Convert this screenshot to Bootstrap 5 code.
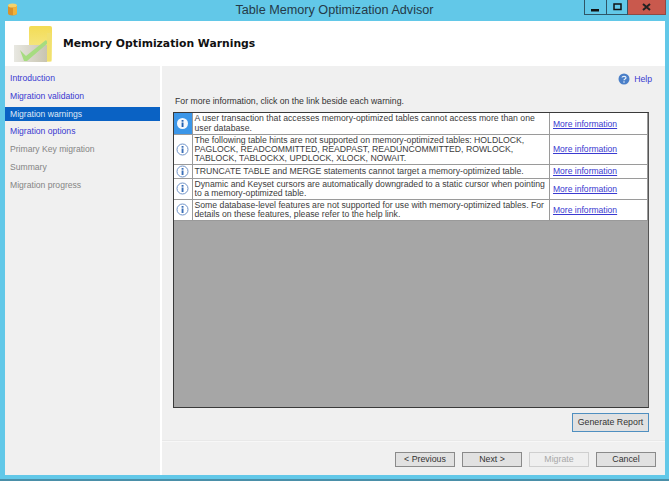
<!DOCTYPE html>
<html lang="en">
<head>
<meta charset="utf-8">
<title>Table Memory Optimization Advisor</title>
<link rel="stylesheet" href="https://cdn.jsdelivr.net/npm/bootstrap@5.3.0/dist/css/bootstrap.min.css">
<style>
html,body{margin:0;height:481px;width:669px;overflow:hidden;background:#62c8e8}
body{font-family:"Liberation Sans",Arial,sans-serif;font-size:8.7px;line-height:10px;color:#333}
.win{width:669px;height:481px;background:#62c8e8;border-bottom:2px solid #4a8fa8;padding:0 4px 4px 5px}
.tbar{height:21px;margin:0 -4px 0 -5px;position:relative}
.ttl{font-size:12.65px;line-height:21px;color:#243a48;text-align:center}
.appic{position:absolute;left:7px;top:3px}
.wbtns{position:absolute;right:3px;top:0;height:15px}
.wb{width:23px;height:15px;border:1px solid #2f5566;border-top:0}
.wb2{width:21px;border-left:0}
.wbx{width:38px;background:#c9594d;border-color:#8e4a44;border-left:0}
.hdr{height:45px;background:#fff;padding-left:9px;gap:10px}
.hdr h1{font-family:"DejaVu Sans",sans-serif;font-size:10.8px;font-weight:700;color:#111;margin:0;line-height:14px}
.bodyrow{height:409px;background:#f0f0f0}
.side{width:155px;padding-top:3px}
.sitem{height:17.8px;line-height:14px;padding:2px 0 2px 5px;color:#3a3ad0;font-size:8.6px}
.sitem.cur{background:#0a62c4;color:#dfe8f6;height:14px;line-height:14px;padding:0 0 0 5px;margin:2px 0 1.8px}
.sitem.off{color:#858585}
.vsep{width:2px;background:#fff}
.mainp{width:503px}
.upper{height:353px;padding:0 16px 0 11px}
.helprow{height:21px;padding-top:4px;gap:4px;color:#3a3ad0;margin-right:-3px}
.intro{margin:9px 0 6px 2px;line-height:10px;height:10px}
.gridbox{height:296px;background:#a6a6a6;border:1px solid #3a3a3a;border-right-color:#555;width:476px}
.wtab{width:100%;margin:0;background:#fff;table-layout:fixed;border-collapse:collapse;line-height:9.3px;font-size:8.68px}
.wtab td{padding:0;border:1px solid #9a9a9a;border-width:0 1px 1px 0;vertical-align:middle;background:#fff;color:#3c3c3c}
.wtab .ic{width:18px;text-align:center}
.wtab .ic svg{display:block;margin:auto}
.wtab .tx{padding:1px 1px 0 2px}
.wtab .lk{width:98px;padding:2px 0 0 3px;font-size:8.55px}
.wtab a{color:#3a3ad0}
.wtab tr.first .ic{background:#3b96e8}
.r1{height:21px}.r2{height:30px}.r3{height:14px}.r4{height:21px}.r5{height:21px}
.genrow{height:19px;margin-top:5px;width:476px}
.wbtnx{font-family:inherit;font-size:8.8px;line-height:11px;padding:0;border-radius:0;height:15px;width:60px;background:#e1e1e1;border:1px solid #8a8a8a;color:#333}
.wbtnx.gen{width:77px;height:19px;border:1px solid #4f8fc0}
.wbtnx.dis{background:#efefef;border-color:#cfcfcf;color:#a8a8a8;opacity:1}
.fsep{height:2px;background:#f7f7f7;margin-top:21px;border-top:1px solid #e8e8e8}
.foot{padding:10px 0 0 233px;gap:7px}
</style>
</head>
<body>
<div class="win">
  <div class="tbar">
    <svg class="appic" width="11" height="13" viewBox="0 0 11 13"><path d="M1 2.500v8c0 1 2 2 4.500 2s4.500-1 4.500-2v-8z" fill="#d9912c"/><ellipse cx="5.500" cy="2.500" rx="4.500" ry="2" fill="#f4d26a"/><path d="M6 4.500v7.800c2-.1 4-1 4-1.800V3.500c-.8.600-2.200 1-4 1z" fill="#f0b23c"/></svg>
    <div class="ttl">Table Memory Optimization Advisor</div>
    <div class="wbtns d-flex">
      <div class="wb d-flex align-items-center justify-content-center"><svg width="9" height="9" viewBox="0 0 9 9"><rect x="0" y="6" width="8" height="2.500" fill="#111"/></svg></div>
      <div class="wb wb2 d-flex align-items-center justify-content-center"><svg width="9" height="8" viewBox="0 0 9 8"><rect x="1" y="1" width="7" height="5.500" fill="none" stroke="#111" stroke-width="1.500"/></svg></div>
      <div class="wb wbx d-flex align-items-center justify-content-center"><svg width="9" height="8" viewBox="0 0 9 8"><path d="M1 1l7 6M8 1L1 7" stroke="#222" stroke-width="2"/></svg></div>
    </div>
  </div>
  <div class="hdr d-flex align-items-center">
    <svg width="39" height="41" viewBox="0 0 39 41">
      <defs><linearGradient id="cy" x1="0" y1="0" x2="0" y2="1"><stop offset="0" stop-color="#f3dc55"/><stop offset="1" stop-color="#f6ec9c"/></linearGradient><linearGradient id="gr" x1="0" y1="0" x2="1" y2="0"><stop offset="0" stop-color="#e8e8e2"/><stop offset="1" stop-color="#c8c4b0"/></linearGradient></defs>
      <rect x="15" y="3" width="23" height="36" rx="2" fill="url(#cy)"/>
      <path d="M0 22h33v17H0z" fill="url(#gr)"/>
      <path d="M6 27l6 6L32 17l2 3-21 18h-3z" fill="#a6dc80"/>
      <path d="M33 10h4v28h-4z" fill="#f0e070"/>
    </svg>
    <h1>Memory Optimization Warnings</h1>
  </div>
  <div class="bodyrow d-flex">
    <div class="side">
      <div class="sitem">Introduction</div>
      <div class="sitem">Migration validation</div>
      <div class="sitem cur">Migration warnings</div>
      <div class="sitem">Migration options</div>
      <div class="sitem off">Primary Key migration</div>
      <div class="sitem off">Summary</div>
      <div class="sitem off">Migration progress</div>
    </div>
    <div class="vsep"></div>
    <div class="mainp">
      <div class="upper">
        <div class="helprow d-flex justify-content-end align-items-center">
          <svg width="12" height="12" viewBox="0 0 12 12"><circle cx="6" cy="6" r="5.500" fill="#4a7fc8"/><path d="M4 4.500c.3-1.500 4-1.500 4 .3 0 1.200-2 1.200-2 2.500" fill="none" stroke="#e6f0fa" stroke-width="1.200"/><circle cx="6" cy="9" r=".8" fill="#e6f0fa"/></svg>
          <span>Help</span>
        </div>
        <div class="intro">For more information, click on the link beside each warning.</div>
        <div class="gridbox">
          <table class="wtab">
            <tr class="r1 first"><td class="ic"><svg width="13" height="13" viewBox="0 0 13 13"><circle cx="6.500" cy="6.500" r="5.500" fill="#f4f8fd"/><rect x="5.600" y="5.500" width="1.900" height="4.500" fill="#1f5fb0"/><rect x="5.600" y="3" width="1.900" height="1.700" fill="#1f5fb0"/></svg></td><td class="tx">A user transaction that accesses memory-optimized tables cannot access more than one user database.</td><td class="lk"><a href="#">More information</a></td></tr>
            <tr class="r2"><td class="ic"><svg width="13" height="13" viewBox="0 0 13 13"><circle cx="6.500" cy="6.500" r="5.500" fill="#fff" stroke="#6f93c8"/><rect x="5.600" y="5.500" width="1.900" height="4.500" fill="#3a6fb8"/><rect x="5.600" y="3" width="1.900" height="1.700" fill="#3a6fb8"/></svg></td><td class="tx">The following table hints are not supported on memory-optimized tables: HOLDLOCK, PAGLOCK, READCOMMITTED, READPAST, READUNCOMMITTED, ROWLOCK, TABLOCK, TABLOCKX, UPDLOCK, XLOCK, NOWAIT.</td><td class="lk"><a href="#">More information</a></td></tr>
            <tr class="r3"><td class="ic"><svg width="13" height="13" viewBox="0 0 13 13"><circle cx="6.500" cy="6.500" r="5.500" fill="#fff" stroke="#6f93c8"/><rect x="5.600" y="5.500" width="1.900" height="4.500" fill="#3a6fb8"/><rect x="5.600" y="3" width="1.900" height="1.700" fill="#3a6fb8"/></svg></td><td class="tx">TRUNCATE TABLE and MERGE statements cannot target a memory-optimized table.</td><td class="lk"><a href="#">More information</a></td></tr>
            <tr class="r4"><td class="ic"><svg width="13" height="13" viewBox="0 0 13 13"><circle cx="6.500" cy="6.500" r="5.500" fill="#fff" stroke="#6f93c8"/><rect x="5.600" y="5.500" width="1.900" height="4.500" fill="#3a6fb8"/><rect x="5.600" y="3" width="1.900" height="1.700" fill="#3a6fb8"/></svg></td><td class="tx">Dynamic and Keyset cursors are automatically downgraded to a static cursor when pointing to a memory-optimized table.</td><td class="lk"><a href="#">More information</a></td></tr>
            <tr class="r5"><td class="ic"><svg width="13" height="13" viewBox="0 0 13 13"><circle cx="6.500" cy="6.500" r="5.500" fill="#fff" stroke="#6f93c8"/><rect x="5.600" y="5.500" width="1.900" height="4.500" fill="#3a6fb8"/><rect x="5.600" y="3" width="1.900" height="1.700" fill="#3a6fb8"/></svg></td><td class="tx">Some database-level features are not supported for use with memory-optimized tables. For details on these features, please refer to the help link.</td><td class="lk"><a href="#">More information</a></td></tr>
          </table>
        </div>
        <div class="genrow d-flex justify-content-end"><button type="button" class="btn wbtnx gen">Generate Report</button></div>
      </div>
      <div class="fsep"></div>
      <div class="foot d-flex">
        <button type="button" class="btn wbtnx">&lt; Previous</button>
        <button type="button" class="btn wbtnx">Next &gt;</button>
        <button type="button" class="btn wbtnx dis">Migrate</button>
        <button type="button" class="btn wbtnx">Cancel</button>
      </div>
    </div>
  </div>
</div>
</body>
</html>
